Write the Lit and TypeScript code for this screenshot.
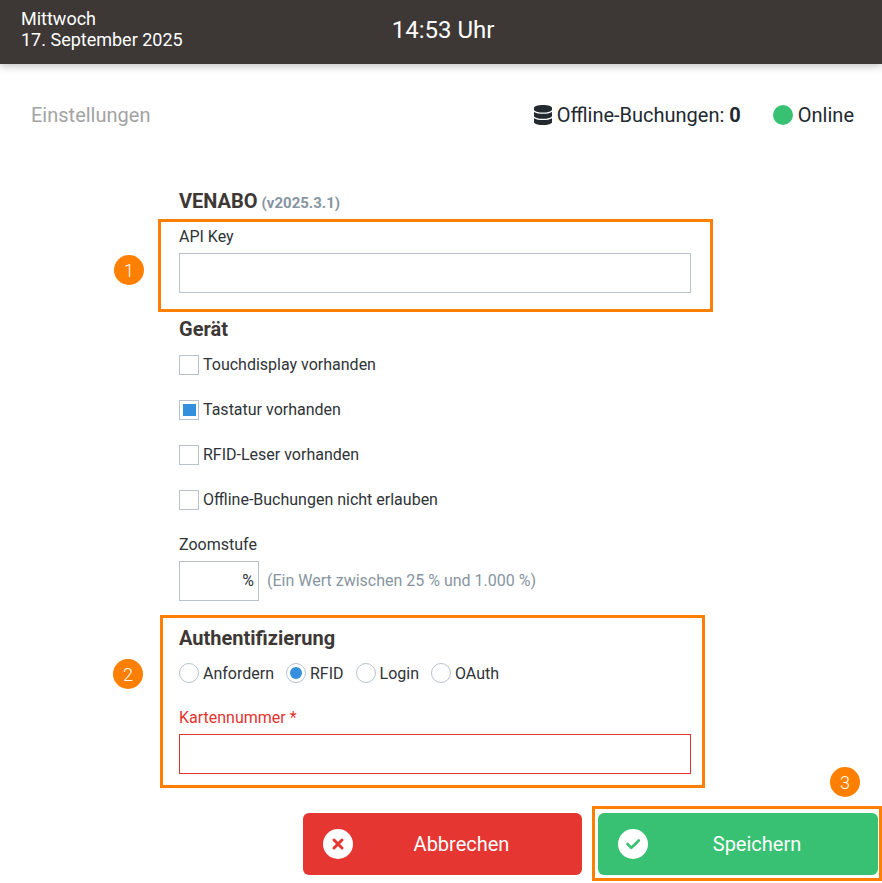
import { LitElement, html, css } from "lit";
import { customElement } from "lit/decorators.js";

@customElement("app-root")
export class AppRoot extends LitElement {
  static styles = css`
    :host { display: block; position: relative; width: 882px; height: 883px; overflow: hidden; background: #fff;
      font-family: Roboto, "Liberation Sans", sans-serif; font-size: 16px; color: #2f3438; }
    * { box-sizing: border-box; }
    .header { height: 64px; background: #3d3835; color: #fff; display: grid; grid-template-columns: 1fr auto 1fr;
      align-items: center; padding: 0 21px 4px; box-shadow: 0 2px 8px rgba(0,0,0,.25); }
    .date { line-height: 21px; font-size: 18px; margin-bottom: 2px; }
    .time { font-size: 24px; padding-left: 4px; }
    .bar { display: flex; align-items: center; justify-content: space-between; padding: 11px 28px 0 31px; height: 91px; }
    .bar h1 { margin: 0; font-size: 20px; font-weight: 400; color: #a3a3a3; }
    .status { display: flex; align-items: center; color: #22292f; font-size: 20px; }
    .status svg { margin-right: 5px; }
    .status b { font-weight: 700; margin-left: 5px; }
    .dot { width: 20px; height: 20px; border-radius: 50%; background: #38c172; margin: 0 5px 0 32px; }
    .form { width: 512px; margin: 0 0 0 179px; padding-top: 35px; }
    h2 { margin: 0; font-size: 20px; line-height: 22px; font-weight: 700; color: #3d3835; }
    h2 small { font-size: 15px; color: #8795a1; margin-left: -1px; }
    label.field { display: block; line-height: 20px; }
    .input { display: block; height: 40px; width: 100%; border: 1px solid #b8c2cc; margin-top: 6px; }
    .check { display: flex; align-items: flex-start; height: 20px; line-height: 20px; margin-bottom: 25px; }
    .box { width: 20px; height: 20px; border: 1px solid #b8c2cc; margin-right: 4px; padding: 3px; }
    .box i { display: block; width: 13px; height: 12px; background: #3490dc; }
    .api { margin-top: 13px; }
    .geraet { margin-top: 25px; margin-bottom: 15px; }
    .zoom { display: flex; align-items: flex-start; margin-top: 6px; line-height: 38px; }
    .zoombox { width: 80px; height: 40px; border: 1px solid #b8c2cc; text-align: right; padding-right: 4px; }
    .hint { margin-left: 8px; color: #8795a1; line-height: 40px; }
    .auth { margin-top: 26px; }
    .radios { display: flex; margin-top: 14px; align-items: flex-start; height: 20px; line-height: 22px; }
    .radio { display: flex; align-items: flex-start; margin-right: 12px; }
    .circle { width: 20px; height: 20px; border-radius: 50%; border: 1px solid #b8c2cc; margin-right: 4px; padding: 3px; }
    .circle i { display: block; width: 12px; height: 12px; border-radius: 50%; background: #3490dc; }
    .err { margin-top: 25px; color: #e3342f; }
    .err .input { border-color: #e3342f; }
    .actions { display: flex; justify-content: flex-end; gap: 16px; margin-top: 39px; padding-right: 4px; }
    .btn { width: 280px; height: 62px; border-radius: 6px; color: #fff; font-size: 20px; display: flex; align-items: center; position: relative; justify-content: center; }
    .btn.red { background: #e53632; width: 279px; padding-left: 38px; }
    .btn.green { background: #38c172; padding-left: 38px; }
    .btn svg { position: absolute; left: 20px; top: 16px; }
    .note { position: absolute; border: 3px solid #ff7f00; pointer-events: none; }
    .n1 { left: 158px; top: 219px; width: 555px; height: 93px; }
    .n2 { left: 160px; top: 615px; width: 545px; height: 173px; }
    .n3 { left: 592px; top: 806px; width: 290px; height: 75px; }
    .num { position: absolute; width: 30px; height: 30px; border-radius: 50%; background: #ff7f00; color: #fff; font-size: 18px; font-weight: 300;
      display: flex; align-items: center; justify-content: center; font-family: Roboto, sans-serif; }
    .c1 { left: 114px; top: 255px; }
    .c2 { left: 113px; top: 659px; }
    .c3 { left: 830px; top: 767px; }
  `;

  private check(label: string, on = false) {
    return html`<div class="check"><span class="box">${on ? html`<i></i>` : ""}</span>${label}</div>`;
  }
  private radio(label: string, on = false) {
    return html`<div class="radio"><span class="circle">${on ? html`<i></i>` : ""}</span>${label}</div>`;
  }

  render() {
    return html`
      <div class="header">
        <div class="date">Mittwoch<br />17. September 2025</div>
        <div class="time">14:53 Uhr</div>
        <div></div>
      </div>
      <div class="bar">
        <h1>Einstellungen</h1>
        <div class="status">
          <svg width="18" height="20" viewBox="0 0 448 512" preserveAspectRatio="none" fill="#22292f">
            <path d="M448 73v46c0 40-100 73-224 73S0 159 0 119V73C0 33 100 0 224 0s224 33 224 73zm0 103v103c0 40-100 73-224 73S0 319 0 279V176c48 33 136 48 224 48s176-15 224-48zm0 160v103c0 40-100 73-224 73S0 479 0 439V336c48 33 136 48 224 48s176-15 224-48z"/>
          </svg>
          Offline-Buchungen: <b>0</b>
          <span class="dot"></span>Online
        </div>
      </div>
      <div class="form">
        <h2>VENABO <small>(v2025.3.1)</small></h2>
        <label class="field api">API Key<span class="input"></span></label>
        <h2 class="geraet">Gerät</h2>
        ${this.check("Touchdisplay vorhanden")}
        ${this.check("Tastatur vorhanden", true)}
        ${this.check("RFID-Leser vorhanden")}
        ${this.check("Offline-Buchungen nicht erlauben")}
        <label class="field">Zoomstufe</label>
        <div class="zoom"><span class="zoombox">%</span><span class="hint">(Ein Wert zwischen 25 % und 1.000 %)</span></div>
        <h2 class="auth">Authentifizierung</h2>
        <div class="radios">
          ${this.radio("Anfordern")}${this.radio("RFID", true)}${this.radio("Login")}${this.radio("OAuth")}
        </div>
        <label class="field err">Kartennummer *<span class="input"></span></label>
      </div>
      <div class="actions">
        <div class="btn red">
          <svg width="30" height="30" viewBox="0 0 30 30"><circle cx="15" cy="15" r="15" fill="#fff"/><path d="M11 11l8 8M19 11l-8 8" stroke="#e53632" stroke-width="3" stroke-linecap="round"/></svg>
          Abbrechen
        </div>
        <div class="btn green">
          <svg width="30" height="30" viewBox="0 0 30 30"><circle cx="15" cy="15" r="15" fill="#fff"/><path d="M9.5 15l3.8 3.8 7.5-7.3" fill="none" stroke="#38c172" stroke-width="2.6" stroke-linecap="round" stroke-linejoin="round"/></svg>
          Speichern
        </div>
      </div>
      <div class="note n1"></div><div class="note n2"></div><div class="note n3"></div>
      <div class="num c1">1</div><div class="num c2">2</div><div class="num c3">3</div>
    `;
  }
}
